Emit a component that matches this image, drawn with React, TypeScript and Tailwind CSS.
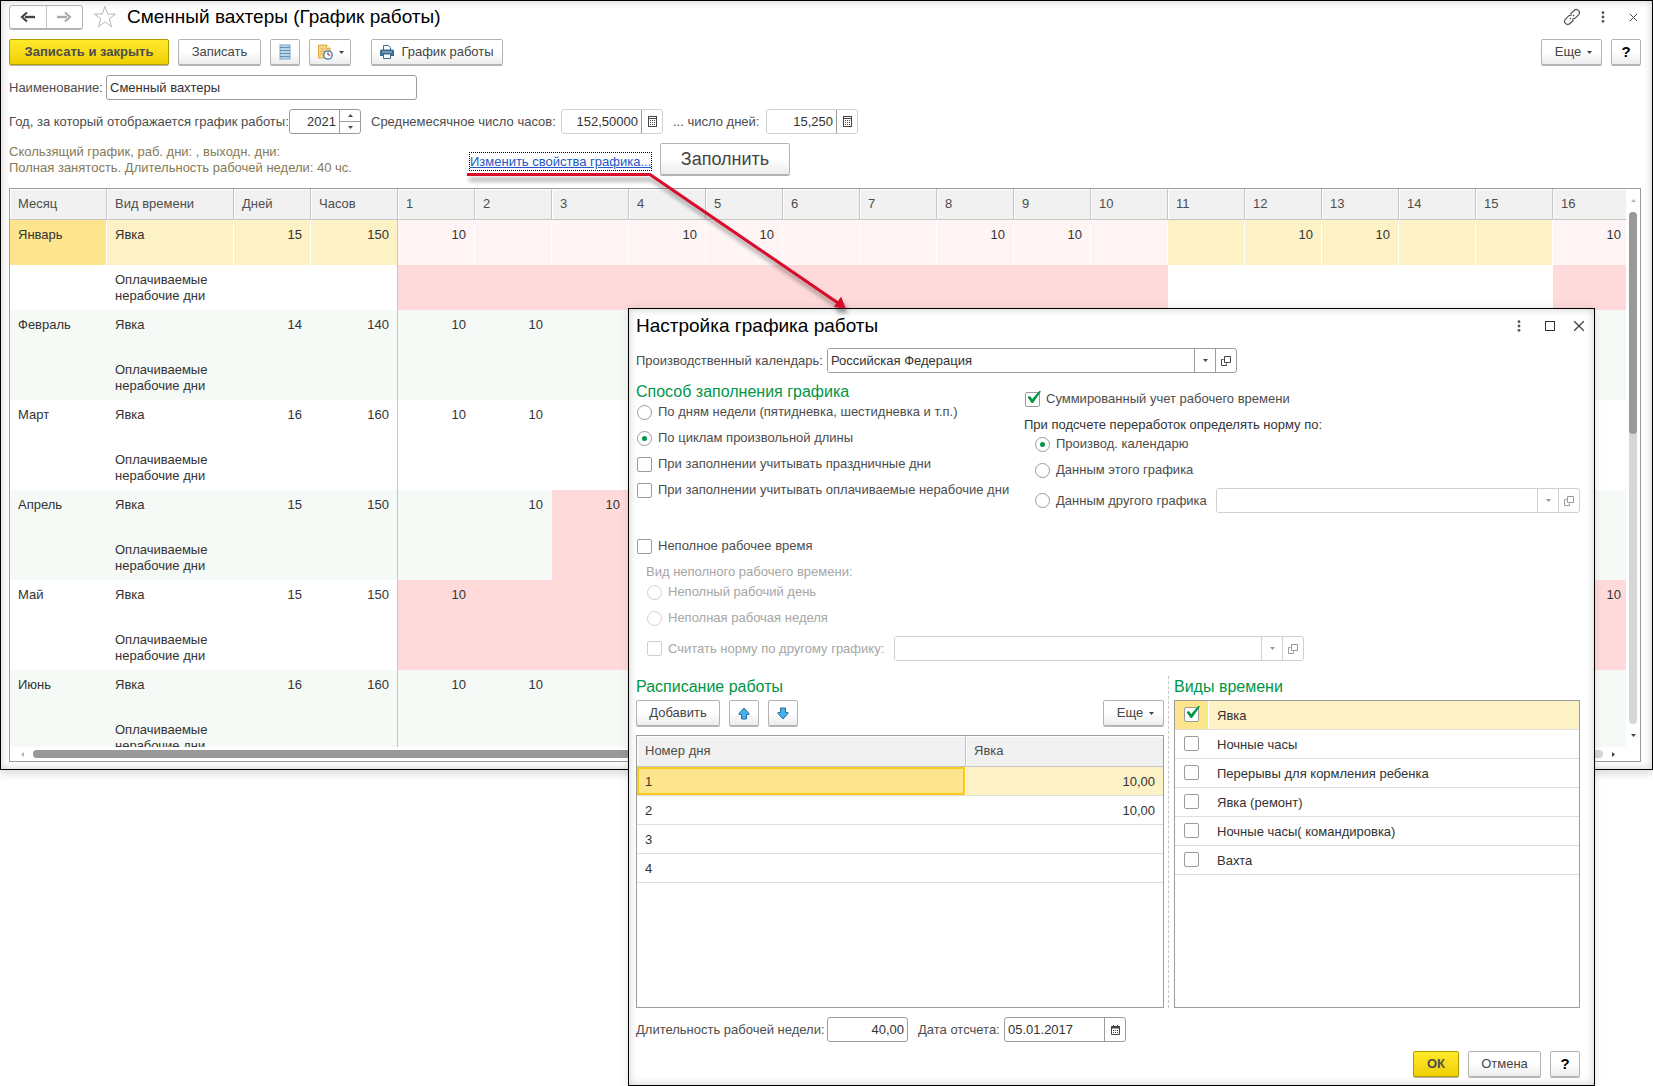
import { useId, type ReactNode } from 'react';
import clsx from 'clsx';

const DAYS = Array.from({ length: 16 }, (_, i) => i + 1);

type Month = { name: string; days: number; hours: number; work: number[]; off: number[] };

const MONTHS: Month[] = [
  { name: 'Январь', days: 15, hours: 150, work: [1, 4, 5, 8, 9, 12, 13, 16], off: [1, 2, 3, 4, 5, 6, 7, 8, 9, 10, 16] },
  { name: 'Февраль', days: 14, hours: 140, work: [1, 2], off: [] },
  { name: 'Март', days: 16, hours: 160, work: [1, 2], off: [] },
  { name: 'Апрель', days: 15, hours: 150, work: [2, 3], off: [3, 4] },
  { name: 'Май', days: 15, hours: 150, work: [1, 16], off: [1, 2, 3, 4, 5, 6, 7, 8, 9, 10, 15, 16] },
  { name: 'Июнь', days: 16, hours: 160, work: [1, 2], off: [] },
];

const SCHEDULE = [
  { day: 1, hours: '10,00' },
  { day: 2, hours: '10,00' },
  { day: 3, hours: '' },
  { day: 4, hours: '' },
];

const TIME_KINDS = [
  'Явка',
  'Ночные часы',
  'Перерывы для кормления ребенка',
  'Явка (ремонт)',
  'Ночные часы( командировка)',
  'Вахта',
];

/* ---------- icons ---------- */

function ArrowIcon({ flip, className }: { flip?: boolean; className?: string }) {
  return (
    <svg width="16" height="12" viewBox="0 0 16 12" className={className}>
      <path d={flip ? 'M1 6h10' : 'M15 6H5'} fill="none" stroke="currentColor" strokeWidth="2.400" />
      <path
        d={flip ? 'M9 1.500l5 4.500L9 10.500' : 'M7 1.500L2 6l5 4.500'}
        fill="none"
        stroke="currentColor"
        strokeWidth="2.200"
      />
    </svg>
  );
}

function StarIcon() {
  return (
    <svg width="24" height="24" viewBox="0 0 24 24">
      <path
        d="M12 1.500L14.800 9H22.500L16.300 13.800L18.600 21.800L12 17L5.400 21.800L7.700 13.800L1.500 9H9.200Z"
        fill="#fff"
        stroke="#b4b8be"
      />
    </svg>
  );
}

function ListIcon() {
  return (
    <svg width="12" height="16" viewBox="0 0 12 16">
      <rect x="1" y="1" width="10" height="14" fill="#b9d7e8" stroke="#7ba6c2" />
      <path d="M1 3.500h10M1 6.500h10M1 9.500h10M1 12.500h10" stroke="#5c93b5" />
    </svg>
  );
}

function ClockDocIcon() {
  return (
    <svg width="16" height="16" viewBox="0 0 16 16">
      <path d="M1.500 1h8L13 4.500V14H1.500Z" fill="#f6d68a" stroke="#d9a943" />
      <path d="M9.500 1v3.500H13" fill="#fff3cf" stroke="#d9a943" />
      <path d="M3.500 5h4M3.500 7.500h4M3.500 10h2" stroke="#dcae4f" />
      <circle cx="11" cy="11" r="4.200" fill="#fff" stroke="#3f78a8" strokeWidth="1.300" />
      <path d="M11 8.300V11" stroke="#333" />
      <path d="M11 11h2.500" stroke="#d0342c" />
    </svg>
  );
}

function PrinterIcon() {
  return (
    <svg width="14" height="14" viewBox="0 0 14 14">
      <path d="M3.500 5V.5h5l2 2V5" fill="#fff" stroke="#3b6b8f" />
      <path d="M1.500 4.500h11q1.500 0 1.500 1.500v5H0V6Q0 4.500 1.500 4.500Z" fill="#3b6b8f" />
      <path d="M2 7h10" stroke="#a9cbe2" />
      <path d="M3.500 9h7v4.500h-7Z" fill="#fff" stroke="#3b6b8f" />
    </svg>
  );
}

function LinkIcon() {
  return (
    <svg width="18" height="18" viewBox="0 0 18 18" fill="none" stroke="#555" strokeWidth="1.200">
      <path d="M7.500 6L11 2.500a3 3 0 0 1 4.500 4.300L12 10.300q-1.300 1-2.700.3" />
      <path d="M10.500 12L7 15.500a3 3 0 0 1-4.500-4.300L6 7.700q1.300-1 2.700-.3" />
      <path d="M6.800 11.200l1.200-1.200M10 8l1.200-1.200" />
    </svg>
  );
}

function DotsIcon() {
  return (
    <svg width="4" height="12" viewBox="0 0 4 12" fill="#555">
      <circle cx="2" cy="1.700" r="1.400" />
      <circle cx="2" cy="6" r="1.400" />
      <circle cx="2" cy="10.300" r="1.400" />
    </svg>
  );
}

function CrossIcon({ size }: { size: number }) {
  return (
    <svg width={size} height={size} viewBox="0 0 10 10">
      <path d="M1 1l8 8M9 1L1 9" stroke="#444" strokeWidth="1.100" />
    </svg>
  );
}

function CalcIcon() {
  return (
    <svg width="9" height="11" viewBox="0 0 9 11">
      <rect x=".5" y=".5" width="8" height="10" fill="#fff" stroke="#444" />
      <path d="M1 2.500h7" stroke="#444" />
      <path d="M2 4.500h5M2 6.500h5M2 8.500h5" stroke="#444" strokeDasharray="1 1" />
    </svg>
  );
}

function CalendarIcon() {
  return (
    <svg width="9" height="10" viewBox="0 0 9 10">
      <path d="M.5 1.500h8v8h-8Z" fill="#fff" stroke="#444" />
      <path d="M0 2.500h9" stroke="#444" strokeWidth="2" />
      <path d="M2.500 0v2M6.500 0v2" stroke="#444" />
      <path d="M2 5.500h5M2 7.500h5" stroke="#444" strokeDasharray="1 1" />
    </svg>
  );
}

function OpenIcon() {
  return (
    <svg width="10" height="10" viewBox="0 0 10 10" fill="none" stroke="currentColor">
      <path d="M3.500 .5h6v6h-6Z" />
      <path d="M2.500 3.500h-2v6h5v-2" />
    </svg>
  );
}

function Triangle({ dir = 'down', className }: { dir?: 'up' | 'down' | 'left' | 'right'; className?: string }) {
  const paths = { up: 'M0 4h5L2.500 1Z', down: 'M0 1h5L2.500 4Z', left: 'M4 0v5L1 2.500Z', right: 'M1 0v5L4 2.500Z' };
  return (
    <svg width="5" height="5" viewBox="0 0 5 5" className={className} fill="currentColor">
      <path d={paths[dir]} />
    </svg>
  );
}

function MoveIcon({ down }: { down?: boolean }) {
  return (
    <svg width="12" height="13" viewBox="0 0 12 13">
      <path
        d={down ? 'M6 12L1 6.500V5.500h2.500V1h5v4.500H11v1Z' : 'M6 1L1 6.500v1h2.500V12h5V7.500H11v-1Z'}
        fill="#45b0ee"
        stroke="#2d6d9b"
      />
    </svg>
  );
}

/* ---------- controls ---------- */

function Button({ children, primary, className, label }: { children: ReactNode; primary?: boolean; className?: string; label?: string }) {
  return (
    <button
      type="button"
      aria-label={label}
      className={clsx(
        'flex shrink-0 items-center justify-center rounded-[2px] border shadow-[0_1px_0_#b5b5b5]',
        primary
          ? 'border-[#b09b00] bg-linear-to-b from-[#ffe928] to-[#f0d000] font-bold text-[#4d4d4d]'
          : 'border-[#b3b3b3] bg-linear-to-b from-white from-50% to-[#ececec] text-[#444]',
        className,
      )}
    >
      {children}
    </button>
  );
}

function Choice({
  type,
  name,
  label,
  checked,
  disabled,
}: {
  type: 'radio' | 'checkbox';
  name?: string;
  label: string;
  checked?: boolean;
  disabled?: boolean;
}) {
  return (
    <label className={clsx('flex h-[26px] items-center gap-[6px] whitespace-nowrap', disabled ? 'text-[#a6a6a6]' : 'text-[#4d4d4d]')}>
      <Mark type={type} name={name} checked={checked} disabled={disabled} />
      {label}
    </label>
  );
}

function Mark({
  type,
  name,
  id,
  checked,
  disabled,
}: {
  type: 'radio' | 'checkbox';
  name?: string;
  id?: string;
  checked?: boolean;
  disabled?: boolean;
}) {
  return (
    <span className="relative ml-px flex size-[15px] shrink-0">
      <input
        id={id}
        type={type}
        name={name}
        defaultChecked={checked}
        disabled={disabled}
        className={clsx(
          'peer size-[15px] appearance-none border bg-white',
          type === 'radio' ? 'rounded-full' : 'rounded-[2px]',
          disabled ? 'border-[#d0d0d0]' : 'border-[#9c9c9c]',
        )}
      />
      {type === 'radio' ? (
        <span className="pointer-events-none absolute inset-[5px] hidden rounded-full bg-[#009646] peer-checked:block" />
      ) : (
        <svg
          width="17"
          height="15"
          viewBox="0 0 17 15"
          className="pointer-events-none absolute -top-[2px] left-0 hidden peer-checked:block"
        >
          <path d="M2.500 7L5 6l2.200 3L14.500 .8L16 1.500L8 13H6.500Z" fill="#009646" />
        </svg>
      )}
    </span>
  );
}

function Field({
  id,
  value,
  align,
  muted,
  className,
  children,
}: {
  id: string;
  value: string;
  align?: 'right';
  muted?: boolean;
  className?: string;
  children?: ReactNode;
}) {
  return (
    <div
      className={clsx(
        'flex h-[25px] shrink-0 overflow-hidden rounded-[3px] border bg-white',
        muted ? 'border-[#d0d0d0]' : 'border-[#9c9c9c]',
        className,
      )}
    >
      <input
        id={id}
        defaultValue={value}
        className={clsx('w-0 min-w-0 flex-1 px-[3px] text-[#333] outline-none', align === 'right' && 'px-[2px] text-right')}
      />
      {children}
    </div>
  );
}

function FieldButton({ label, children, className }: { label: string; children: ReactNode; className?: string }) {
  return (
    <button type="button" aria-label={label} className={clsx('flex items-center justify-center border-l border-[#9c9c9c]', className)}>
      {children}
    </button>
  );
}

function Picker({ id, value, disabled, label, className }: { id?: string; value?: string; disabled?: boolean; label?: string; className?: string }) {
  const line = disabled ? 'border-[#d0d0d0] text-[#999]' : 'border-[#9c9c9c] text-[#444]';
  return (
    <div className={clsx('flex h-[25px] overflow-hidden rounded-[3px] border bg-white', line, className)}>
      <div className="relative flex flex-1">
        <select
          id={id}
          aria-label={label}
          disabled={disabled}
          className="w-0 flex-1 appearance-none bg-white pr-6 pl-[3px] text-[#333] outline-none"
        >
          {value && <option>{value}</option>}
        </select>
        <span className={clsx('pointer-events-none absolute inset-y-0 right-0 flex w-[21px] items-center justify-center border-l', line)}>
          <Triangle />
        </span>
      </div>
      <button type="button" aria-label="Открыть" disabled={disabled} className={clsx('flex w-[21px] items-center justify-center border-l', line)}>
        <OpenIcon />
      </button>
    </div>
  );
}

/* ---------- work schedule table ---------- */

function dayColor(month: number, row: number, day: number) {
  const off = MONTHS[month].off.includes(day);
  if (month === 0 && row === 0) return off ? 'bg-[#fff5f5] border-white' : 'bg-[#fdf1c6] border-white';
  if (off) return 'bg-[#ffdada] border-transparent';
  return 'border-transparent';
}

function YearTable() {
  return (
    <table className="w-[1620px] table-fixed border-separate border-spacing-0 text-[#333]">
      <colgroup>
        <col className="w-[97px]" />
        <col className="w-[127px]" />
        <col className="w-[77px]" />
        <col className="w-[87px]" />
        {DAYS.map((d) => (
          <col key={d} className="w-[77px]" />
        ))}
      </colgroup>
      <thead>
        <tr className="h-[31px] text-left text-[#4d4d4d]">
          {['Месяц', 'Вид времени', 'Дней', 'Часов', ...DAYS].map((title) => (
            <th key={title} className="border-r border-b border-[#c6c6c6] bg-[#f1f1f1] px-2 font-normal shadow-[inset_1px_1px_0_#fff]">
              {title}
            </th>
          ))}
        </tr>
      </thead>
      <tbody>
        {MONTHS.map((m, mi) =>
          [0, 1].map((row) => {
            const current = mi === 0 && row === 0;
            const side = current ? 'border-r border-white bg-[#fdf1c6]' : 'border-r border-transparent';
            return (
              <tr key={m.name + row} className={clsx('h-[45px] align-top leading-4', mi % 2 === 1 && 'bg-[#f5faf7]')}>
                <td className={clsx('px-2 pt-[7px]', current && 'border-r border-white bg-[#fde58e]')}>{row === 0 && m.name}</td>
                <td className={clsx('px-2 pt-[7px]', side)}>{row === 0 ? 'Явка' : 'Оплачиваемые нерабочие дни'}</td>
                <td className={clsx('px-2 pt-[7px] text-right', side)}>{row === 0 && m.days}</td>
                <td className={clsx('border-r border-[#c6c6c6] px-2 pt-[7px] text-right', current && 'bg-[#fdf1c6]')}>
                  {row === 0 && m.hours}
                </td>
                {DAYS.map((d) => (
                  <td key={d} className={clsx('border-r px-2 pt-[7px] text-right', dayColor(mi, row, d))}>
                    {row === 0 && m.work.includes(d) && 10}
                  </td>
                ))}
              </tr>
            );
          }),
        )}
      </tbody>
    </table>
  );
}

function YearGrid() {
  return (
    <div className="mt-[13px] flex border border-[#9c9c9c]">
      <div className="min-w-0 flex-1">
        <div className="h-[558px] overflow-hidden">
          <YearTable />
        </div>
        <div className="flex h-[14px] items-center gap-2 px-[10px]">
          <Triangle dir="left" className="text-[#b5b5b5]" />
          <div className="h-2 flex-1 rounded-full bg-[#d6d6d6]">
            <div className="h-2 w-4/5 rounded-full bg-[#999]" />
          </div>
          <Triangle dir="right" className="text-[#444]" />
        </div>
      </div>
      <div className="flex w-[14px] flex-col items-center gap-[9px] pt-[9px] pb-[23px]">
        <Triangle dir="up" className="text-[#b5b5b5]" />
        <div className="w-2 flex-1 rounded-full bg-[#d6d6d6]">
          <div className="h-[222px] rounded-full bg-[#999]" />
        </div>
        <Triangle className="text-[#444]" />
      </div>
    </div>
  );
}

function MainWindow() {
  const id = useId();
  return (
    <section className="border border-black bg-white pt-1 pr-[11px] pb-[7px] pl-2 shadow-[inset_0_0_8px_rgba(0,0,0,0.2),0_4px_8px_rgba(0,0,0,0.15)]">
      <header className="flex h-6 items-center">
        <div className="flex h-6 w-[74px] rounded-[3px] border border-[#b3b3b3] shadow-[0_1px_0_#b5b5b5]">
          <button type="button" aria-label="Назад" className="flex flex-1 items-center justify-center border-r border-[#c6c6c6] text-[#444]">
            <ArrowIcon />
          </button>
          <button type="button" aria-label="Вперед" className="flex flex-1 items-center justify-center text-[#aaa]">
            <ArrowIcon flip />
          </button>
        </div>
        <button type="button" aria-label="Добавить в избранное" className="mx-[10px]">
          <StarIcon />
        </button>
        <h1 className="text-[19px] text-black">Сменный вахтеры (График работы)</h1>
        <div className="mr-[3px] ml-auto flex items-center gap-5">
          <button type="button" aria-label="Ссылка"><LinkIcon /></button>
          <button type="button" aria-label="Меню"><DotsIcon /></button>
          <button type="button" aria-label="Закрыть" className="ml-1"><CrossIcon size={9} /></button>
        </div>
      </header>

      <div className="mt-[10px] flex h-[26px] gap-[9px]">
        <Button primary className="w-[160px]">Записать и закрыть</Button>
        <Button className="w-[83px]">Записать</Button>
        <Button className="w-[30px]" label="Список"><ListIcon /></Button>
        <Button className="w-[42px] gap-[6px]" label="Отчеты">
          <ClockDocIcon />
          <Triangle />
        </Button>
        <Button className="ml-[11px] w-[132px] gap-[7px]">
          <PrinterIcon />
          График работы
        </Button>
        <Button className="ml-auto w-[61px] gap-[6px] pl-1">
          Еще
          <Triangle />
        </Button>
        <Button className="w-[30px] text-[15px] font-bold text-black">?</Button>
      </div>

      <div className="mt-[10px] flex items-center">
        <label htmlFor={id + 'name'} className="w-[97px]">Наименование:</label>
        <Field id={id + 'name'} value="Сменный вахтеры" className="w-[311px]" />
      </div>

      <div className="mt-[9px] flex items-center whitespace-nowrap">
        <label htmlFor={id + 'year'} className="w-[280px]">Год, за который отображается график работы:</label>
        <Field id={id + 'year'} value="2021" align="right" className="w-[72px]">
          <div className="flex w-[21px] flex-col border-l border-[#9c9c9c]">
            <button type="button" aria-label="Больше" className="flex flex-1 items-center justify-center border-b border-[#9c9c9c]">
              <Triangle dir="up" />
            </button>
            <button type="button" aria-label="Меньше" className="flex flex-1 items-center justify-center">
              <Triangle />
            </button>
          </div>
        </Field>
        <label htmlFor={id + 'hours'} className="ml-[10px] w-[190px]">Среднемесячное число часов:</label>
        <Field id={id + 'hours'} value="152,50000" align="right" muted className="w-[102px]">
          <FieldButton label="Калькулятор" className="w-[21px]"><CalcIcon /></FieldButton>
        </Field>
        <label htmlFor={id + 'days'} className="ml-[10px] w-[93px]">... число дней:</label>
        <Field id={id + 'days'} value="15,250" align="right" muted className="w-[92px]">
          <FieldButton label="Калькулятор" className="w-[21px]"><CalcIcon /></FieldButton>
        </Field>
      </div>

      <div className="mt-[9px] flex h-8">
        <p className="w-[460px] pt-px leading-4 text-[#857a58]">
          Скользящий график, раб. дни: , выходн. дни:
          <br />
          Полная занятость. Длительность рабочей недели: 40 чс.
        </p>
        <a href="#settings" className="mt-[9px] h-[19px] w-[183px] border border-dotted border-black leading-[18px] whitespace-nowrap text-[#2457c5] underline">
          Изменить свойства графика...
        </a>
        <Button className="ml-2 w-[130px] text-[18px]">Заполнить</Button>
      </div>

      <YearGrid />
    </section>
  );
}

/* ---------- settings dialog ---------- */

function ScheduleTable() {
  return (
    <div className="mt-[9px] h-[273px] border border-[#9c9c9c]">
      <table className="w-full table-fixed border-separate border-spacing-0 text-[#333]">
        <colgroup>
          <col className="w-[329px]" />
          <col />
        </colgroup>
        <thead>
          <tr className="h-[31px] text-left text-[#4d4d4d]">
            <th className="border-r border-b border-[#c6c6c6] bg-[#f1f1f1] px-2 font-normal shadow-[inset_1px_1px_0_#fff]">Номер дня</th>
            <th className="border-b border-[#c6c6c6] bg-[#f1f1f1] px-2 font-normal shadow-[inset_1px_1px_0_#fff]">Явка</th>
          </tr>
        </thead>
        <tbody>
          {SCHEDULE.map((row, i) => (
            <tr key={row.day} className="h-[29px]">
              <td
                className={clsx(
                  'border-b border-[#dedede] px-2 pt-px',
                  i === 0 && 'border-r border-r-white bg-[#fde58e] shadow-[inset_0_0_0_2px_#f9c920]',
                )}
              >
                {row.day}
              </td>
              <td className={clsx('border-b border-[#dedede] px-2 pt-px text-right', i === 0 && 'bg-[#fdf1c6]')}>{row.hours}</td>
            </tr>
          ))}
        </tbody>
      </table>
    </div>
  );
}

function TimeKinds() {
  const id = useId();
  return (
    <ul className="mt-[3px] h-[308px] border border-[#9c9c9c] text-[#333]">
      {TIME_KINDS.map((kind, i) => (
        <li key={kind} className={clsx('flex h-[29px] items-center border-b border-[#dedede]', i === 0 && 'bg-[#fdf1c6]')}>
          <span className={clsx('flex h-full w-[34px] items-center border-r pb-px pl-2', i === 0 ? 'border-white bg-[#fde58e]' : 'border-transparent')}>
            <Mark type="checkbox" id={id + i} checked={i === 0} />
          </span>
          <label htmlFor={id + i} className="flex-1 pt-px pl-2">{kind}</label>
        </li>
      ))}
    </ul>
  );
}

function SettingsDialog() {
  const id = useId();
  return (
    <section
      id="settings"
      role="dialog"
      aria-label="Настройка графика работы"
      className="absolute top-[308px] right-[58px] left-[628px] border border-black bg-white pt-[5px] pr-[14px] pb-2 pl-[7px] shadow-[inset_0_0_8px_rgba(0,0,0,0.2),0_0_8px_rgba(0,0,0,0.12)]"
    >
      <header className="flex h-6 items-center">
        <h2 className="text-[19px] text-black">Настройка графика работы</h2>
        <div className="-mr-[5px] ml-auto flex items-center gap-[18px]">
          <button type="button" aria-label="Меню" className="mr-[6px]"><DotsIcon /></button>
          <button type="button" aria-label="Развернуть" className="size-[10px] border border-[#333]" />
          <button type="button" aria-label="Закрыть"><CrossIcon size={12} /></button>
        </div>
      </header>

      <div className="mt-[10px] flex items-center">
        <label htmlFor={id + 'calendar'} className="w-[191px]">Производственный календарь:</label>
        <Picker id={id + 'calendar'} value="Российская Федерация" className="w-[410px]" />
      </div>

      <div className="mt-[6px] grid grid-cols-[388px_1fr]">
        <fieldset>
          <legend className="h-5 text-[16px] leading-[26px] text-[#009646]">Способ заполнения графика</legend>
          <Choice type="radio" name="fill" label="По дням недели (пятидневка, шестидневка и т.п.)" />
          <Choice type="radio" name="fill" label="По циклам произвольной длины" checked />
          <Choice type="checkbox" label="При заполнении учитывать праздничные дни" />
          <Choice type="checkbox" label="При заполнении учитывать оплачиваемые нерабочие дни" />
        </fieldset>
        <div className="pt-[7px]">
          <Choice type="checkbox" label="Суммированный учет рабочего времени" checked />
          <p className="mt-1 h-[15px] leading-[18px] text-[#333]">При подсчете переработок определять норму по:</p>
          <div className="pl-[10px]">
            <Choice type="radio" name="norm" label="Производ. календарю" checked />
            <Choice type="radio" name="norm" label="Данным этого графика" />
            <div className="mt-[5px] flex h-[25px] items-center">
              <div className="w-[182px]">
                <Choice type="radio" name="norm" label="Данным другого графика" />
              </div>
              <Picker disabled label="Другой график" className="flex-1" />
            </div>
          </div>
        </div>
      </div>

      <div className="mt-5">
        <Choice type="checkbox" label="Неполное рабочее время" />
        <div className="pl-[10px]">
          <p className="mt-[5px] h-[15px] leading-4 text-[#a6a6a6]">Вид неполного рабочего времени:</p>
          <Choice type="radio" name="part" label="Неполный рабочий день" disabled />
          <Choice type="radio" name="part" label="Неполная рабочая неделя" disabled />
          <div className="mt-[5px] flex h-[25px] items-center">
            <div className="w-[248px]">
              <Choice type="checkbox" label="Считать норму по другому графику:" disabled />
            </div>
            <Picker disabled label="График для нормы" className="w-[410px]" />
          </div>
        </div>
      </div>

      <div className="mt-[15px] grid grid-cols-[528fr_10px_406fr]">
        <div>
          <h3 className="h-5 text-[16px] leading-[22px] text-[#009646]">Расписание работы</h3>
          <div className="mt-1 flex h-[26px] gap-[9px]">
            <Button className="w-[84px]">Добавить</Button>
            <Button className="w-[30px]" label="Вверх"><MoveIcon /></Button>
            <Button className="w-[30px]" label="Вниз"><MoveIcon down /></Button>
            <Button className="ml-auto w-[61px] gap-[6px] pl-1">
              Еще
              <Triangle />
            </Button>
          </div>
          <ScheduleTable />
        </div>
        <div className="ml-1 border-l border-dashed border-[#c6c6c6]" />
        <div>
          <h3 className="mb-1 h-5 text-[16px] leading-[22px] text-[#009646]">Виды времени</h3>
          <TimeKinds />
        </div>
      </div>

      <div className="mt-[9px] flex items-center">
        <label htmlFor={id + 'week'} className="w-[191px]">Длительность рабочей недели:</label>
        <Field id={id + 'week'} value="40,00" align="right" className="w-[81px]" />
        <label htmlFor={id + 'start'} className="ml-[10px] w-[86px]">Дата отсчета:</label>
        <Field id={id + 'start'} value="05.01.2017" className="w-[122px]">
          <FieldButton label="Выбрать дату" className="w-[21px]"><CalendarIcon /></FieldButton>
        </Field>
      </div>

      <footer className="mt-[9px] flex h-[26px] justify-end gap-[9px]">
        <Button primary className="w-[46px]">ОК</Button>
        <Button className="w-[73px]">Отмена</Button>
        <Button className="w-[30px] text-[15px] font-bold text-black">?</Button>
      </footer>
    </section>
  );
}

// Red underline of the link with an arrow to the dialog
function Callout() {
  return (
    <svg width="900" height="330" viewBox="0 0 900 330" className="pointer-events-none absolute top-0 left-0 drop-shadow-[2px_5px_2px_rgba(0,0,0,0.4)]">
      <path d="M467 174.500H650L838 303" fill="none" stroke="#d90d2b" strokeWidth="3" />
      <path d="M845 308L834.500 306.500L841 297.500Z" fill="#d90d2b" stroke="#d90d2b" />
    </svg>
  );
}

export default function App() {
  return (
    <main className="relative min-h-screen bg-white font-['Liberation_Sans',Arial,sans-serif] text-[13px] text-[#4d4d4d]">
      <MainWindow />
      <SettingsDialog />
      <Callout />
    </main>
  );
}
